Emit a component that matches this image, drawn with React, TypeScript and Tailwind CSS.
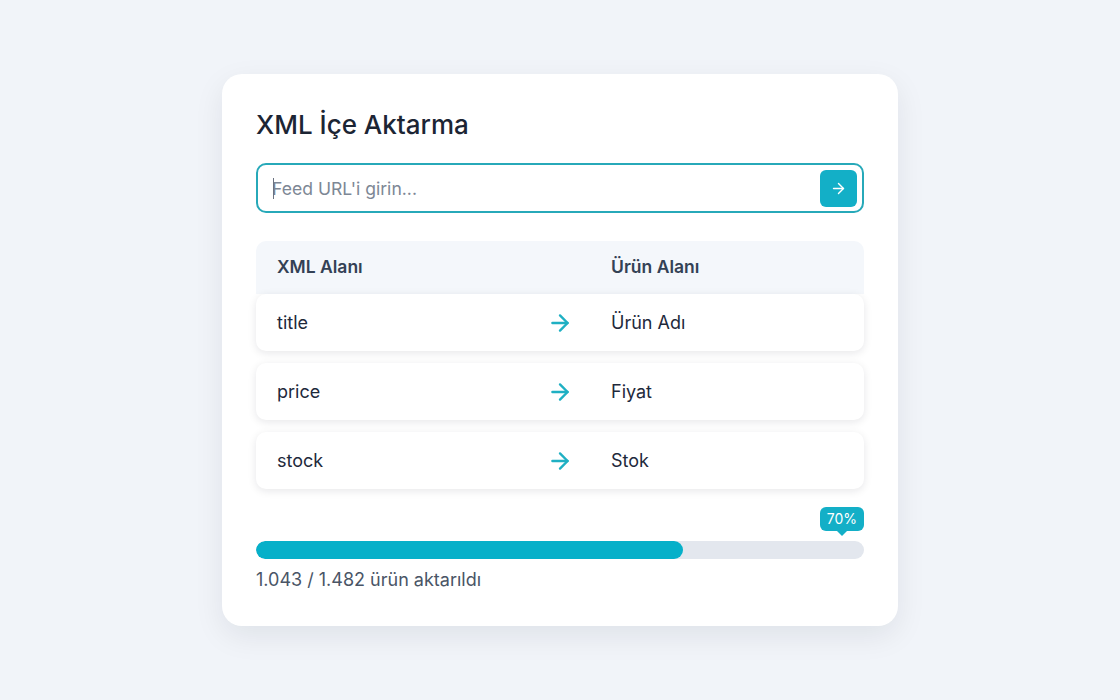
import { ArrowRight } from "lucide-react"

const mappings = [
  { from: "title", to: "Ürün Adı" },
  { from: "price", to: "Fiyat" },
  { from: "stock", to: "Stok" },
]

export default function App() {
  const percent = 70.3

  return (
    <div className="flex h-[700px] w-full justify-center bg-[#f1f4f9] pt-[74px] font-['Inter',sans-serif]">
      <div className="h-[552px] w-[676px] rounded-[20px] bg-white px-[34px] pt-[35px] shadow-[0_10px_30px_rgba(15,23,42,0.08)]">
        {/* Title */}
        <h1 className="h-[32px] text-[26px] leading-[32px] font-medium text-[#1c2534]">XML İçe Aktarma</h1>

        {/* Feed URL input */}
        <div className="relative mt-[22px] flex h-[50px] items-center rounded-[10px] border-2 border-[#27a9b9] pl-[14px] pr-[5px]">
          <span className="absolute left-[15px] top-[13px] h-[21px] w-px bg-[#6b7280]" />
          <input
            type="text"
            placeholder="Feed URL'i girin..."
            className="h-full flex-1 bg-transparent text-[17.6px] text-[#1e293b] outline-none placeholder:text-[#7d8795]"
          />
          <button className="flex h-[37px] w-[37px] items-center justify-center rounded-[6px] bg-[#13afc7] text-white">
            <ArrowRight className="h-[17px] w-[17px]" strokeWidth={2} />
          </button>
        </div>

        {/* Mapping table */}
        <div className="mt-[28px]">
          <div className="flex h-[53px] items-center rounded-t-[10px] bg-[#f4f7fb] pl-[21px] text-[17.5px] font-semibold text-[#334155]">
            <span className="w-[334px]">XML Alanı</span>
            <span>Ürün Alanı</span>
          </div>
          <div className="flex flex-col gap-[12px]">
            {mappings.map((m) => (
              <div
                key={m.from}
                className="flex h-[57px] items-center rounded-[10px] bg-white pl-[21px] text-[18px] text-[#1e293b] shadow-[0_2px_8px_rgba(15,23,42,0.10)]"
              >
                <span className="w-[270px]">{m.from}</span>
                <ArrowRight className="h-[26px] w-[26px] text-[#1fb0c3]" strokeWidth={2.2} />
                <span className="ml-[38px]">{m.to}</span>
              </div>
            ))}
          </div>
        </div>

        {/* Progress */}
        <div className="mt-[18px] flex justify-end">
          <div className="relative rounded-[6px] bg-[#13afc7] px-[7px] py-[2px] text-[14px] leading-[20px] text-white">
            70%
            <span className="absolute left-1/2 top-full h-0 w-0 -translate-x-1/2 border-x-[5px] border-t-[5px] border-x-transparent border-t-[#13afc7]" />
          </div>
        </div>
        <div className="mt-[10px] h-[18px] w-full overflow-hidden rounded-full bg-[#e3e7ee]">
          <div className="h-full rounded-full bg-[#06b0c9]" style={{ width: `${percent}%` }} />
        </div>
        <p className="mt-[9px] text-[18px] leading-[24px] text-[#4a5566]">1.043 / 1.482 ürün aktarıldı</p>
      </div>
    </div>
  )
}
